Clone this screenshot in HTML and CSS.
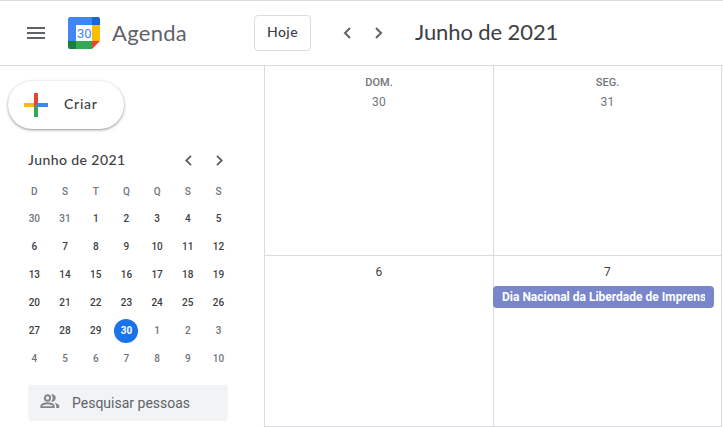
FILE: index.html
```html
<!DOCTYPE html>
<html lang="pt-BR">
<head>
<meta charset="utf-8">
<title>Agenda</title>
<link rel="stylesheet" href="styles.css">
</head>
<body>
<div class="app">
  <header class="topbar">
    <svg class="menu" viewBox="0 0 18 12"><path d="M0 0h18v2H0zM0 5h18v2H0zM0 10h18v2H0z"/></svg>
    <svg class="logo" viewBox="0 0 32 32">
      <path fill="#4285f4" d="M2 0h22v8H8v16H0V2a2 2 0 0 1 2-2z"/>
      <path fill="#1967d2" d="M24 0h6a2 2 0 0 1 2 2v6h-8z"/>
      <path fill="#fbbc04" d="M24 8h8v16h-8z"/>
      <path fill="#34a853" d="M8 24h16v8H8z"/>
      <path fill="#188038" d="M0 24h8v8H2a2 2 0 0 1-2-2z"/>
      <path fill="#ea4335" d="M24 24h8l-8 8z"/>
      <path fill="#fff" d="M8 8h16v16H8z"/>
      <text class="logo-day" x="16.2" y="20.7" text-anchor="middle">30</text>
    </svg>
    <span class="brand">Agenda</span>
    <button class="today">Hoje</button>
    <svg class="arrow prev" viewBox="0 0 8 12"><path d="M7 1L2 6l5 5"/></svg>
    <svg class="arrow next" viewBox="0 0 8 12"><path d="M1 1l5 5-5 5"/></svg>
    <h1 class="period">Junho de 2021</h1>
  </header>
  <div class="body">
    <aside class="sidebar">
      <button class="create">
        <svg class="plus" viewBox="0 0 24 24">
          <path fill="#fbbc04" d="M0 10h10v4H0z"/>
          <path fill="#4285f4" d="M12 10h12v4H10z"/>
          <path fill="#34a853" d="M10 14l4-2v12h-4z"/>
          <path fill="#ea4335" d="M10 0h4v10l-4 4z"/>
        </svg>
        <span class="create-label">Criar</span>
      </button>
      <div class="mini-head">
        <span class="mini-title">Junho de 2021</span>
        <svg class="mini-arrow" viewBox="0 0 7 11"><path d="M6 .8L1.3 5.5 6 10.2"/></svg>
        <svg class="mini-arrow mini-next" viewBox="0 0 7 11"><path d="M1 .8l4.7 4.7L1 10.2"/></svg>
      </div>
      <div class="mini">
        <span class="dim head">D</span><span class="dim head">S</span><span class="dim head">T</span><span class="dim head">Q</span><span class="dim head">Q</span><span class="dim head">S</span><span class="dim head">S</span>
        <span class="dim">30</span><span class="dim">31</span><span>1</span><span>2</span><span>3</span><span>4</span><span>5</span>
        <span>6</span><span>7</span><span>8</span><span>9</span><span>10</span><span>11</span><span>12</span>
        <span>13</span><span>14</span><span>15</span><span>16</span><span>17</span><span>18</span><span>19</span>
        <span>20</span><span>21</span><span>22</span><span>23</span><span>24</span><span>25</span><span>26</span>
        <span>27</span><span>28</span><span>29</span><span class="selected">30</span><span class="dim">1</span><span class="dim">2</span><span class="dim">3</span>
        <span class="dim">4</span><span class="dim">5</span><span class="dim">6</span><span class="dim">7</span><span class="dim">8</span><span class="dim">9</span><span class="dim">10</span>
      </div>
      <div class="search">
        <svg class="people" viewBox="0 0 20 15">
          <g fill="none" stroke="#80868b" stroke-width="1.9">
            <circle cx="7.5" cy="4" r="2.7"/>
            <path d="M1.3 13.1v-1.2c0-1.6 3.7-2.6 6.2-2.6s6.2 1 6.2 2.6v1.2z"/>
          </g>
          <path fill="#80868b" d="M11.2.4a3.7 3.7 0 1 1 0 7.2 5.5 5.5 0 0 0 0-7.2zM14.2 8.8c2.7.5 5 1.5 5 3.2v2h-3v-2.2c0-1.200-.8-2.200-2-3z"/>
        </svg>
        <span>Pesquisar pessoas</span>
      </div>
    </aside>
    <main class="grid">
      <section class="cell first"><div class="weekday">DOM.</div><div class="date muted">30</div></section>
      <section class="cell first"><div class="weekday">SEG.</div><div class="date muted">31</div></section>
      <section class="cell"><div class="date">6</div></section>
      <section class="cell"><div class="date">7</div><div class="event"><span>Dia Nacional da Liberdade de Imprensa</span></div></section>
    </main>
  </div>
</div>
</body>
</html>
```
FILE: styles.css
```css
* { box-sizing: border-box; }
body { margin: 0; background: #fff; color: #3c4043; font-family: Roboto, sans-serif; overflow: hidden; }
button { font: inherit; color: inherit; background: #fff; padding: 0; }
svg { display: block; flex: none; }

.app { width: 723px; height: 427px; display: flex; flex-direction: column; }
.topbar {
  height: 66px; flex: none; display: flex; align-items: center;
  border-top: 1px solid #dadce0; border-bottom: 1px solid #dadce0;
  padding-left: 27px; font-family: Lato, sans-serif;
}
.menu { width: 18px; height: 12px; fill: #5f6368; }
.logo { width: 32px; height: 32px; margin-left: 23px; }
.logo-day { font: 400 13px Roboto, sans-serif; fill: #4285f4; }
.brand { width: 154px; padding-left: 12px; font-size: 22px; line-height: 28px; color: #5f6368; letter-spacing: .3px; }
.today {
  width: 57px; height: 36px; border: 1px solid #dadce0; border-radius: 4px; padding-bottom: 3px;
  font-size: 14px; font-weight: 500; letter-spacing: .45px;
}
.arrow { width: 8px; height: 12px; fill: none; stroke: #5f6368; stroke-width: 2; }
.prev { margin-left: 32px; }
.next { margin-left: 24px; }
.period { margin: 0 0 0 32px; padding-bottom: 2px; font-size: 22px; line-height: 28px; font-weight: 400; letter-spacing: -.1px; white-space: nowrap; }

.body { flex: 1; display: flex; min-height: 0; }
.sidebar { width: 264px; flex: none; padding-top: 15px; }
.create {
  display: flex; align-items: center; width: 116px; height: 48px; margin-left: 8px; padding-left: 16px;
  border: 0; border-radius: 24px; font: 500 14px Lato, sans-serif; letter-spacing: .75px;
  box-shadow: 0 1px 2px rgba(60,64,67,.4), 0 1px 3px 1px rgba(60,64,67,.15);
}
.create-label { padding-bottom: 3px; }
.plus { width: 24px; height: 24px; margin-right: 16px; }
.mini-head { display: flex; align-items: center; height: 20px; margin-top: 21px; padding-left: 28px; }
.mini-title { width: 157px; padding-bottom: 1px; font: 500 14px Lato, sans-serif; letter-spacing: .42px; }
.mini-arrow { width: 7px; height: 11px; fill: none; stroke: #5f6368; stroke-width: 1.9; }
.mini-next { margin-left: 24px; }
.mini {
  display: grid; grid-template-columns: repeat(7, 30.7px); grid-template-rows: 27px repeat(6, 28px);
  margin: 8px 0 0 19px; font-size: 10px; font-weight: 500; text-align: center; place-items: center;
}
.mini span { padding-bottom: 2px; }
.mini .head, .mini .selected { padding-bottom: 0; }
.dim { color: #70757a; }
.selected { width: 24px; line-height: 24px; border-radius: 50%; background: #1a73e8; color: #fff; font-weight: 700; }
.search {
  display: flex; align-items: center; width: 200px; height: 36px; margin: 12px 0 0 28px; padding-left: 12px;
  border-radius: 4px; background: #f1f3f4; color: #5f6368; font-size: 14px;
}
.people { width: 20px; height: 15px; margin: -3px 12px 0 0; }

.grid { width: 459px; flex: none; display: grid; grid-template-columns: 229px 228px; grid-template-rows: 190px 171px; border-left: 1px solid #dadce0; }
.cell { min-width: 0; border-right: 1px solid #dadce0; border-bottom: 1px solid #dadce0; text-align: center; padding-top: 8px; }
.first { padding-top: 9px; }
.weekday { font-size: 11px; line-height: 16px; font-weight: 500; color: #70757a; margin-bottom: 3px; }
.date { font-size: 12px; line-height: 16px; font-weight: 400; letter-spacing: .2px; }
.muted { color: #70757a; }
.event {
  width: 221px; height: 22px; margin: 6px 0 0 -1px; padding: 0 9px; border-radius: 4px; background: #7986cb;
  color: #fff; font-size: 12px; line-height: 22px; font-weight: 700; text-align: left;
}
.event span { display: block; overflow: hidden; white-space: nowrap; }
```
